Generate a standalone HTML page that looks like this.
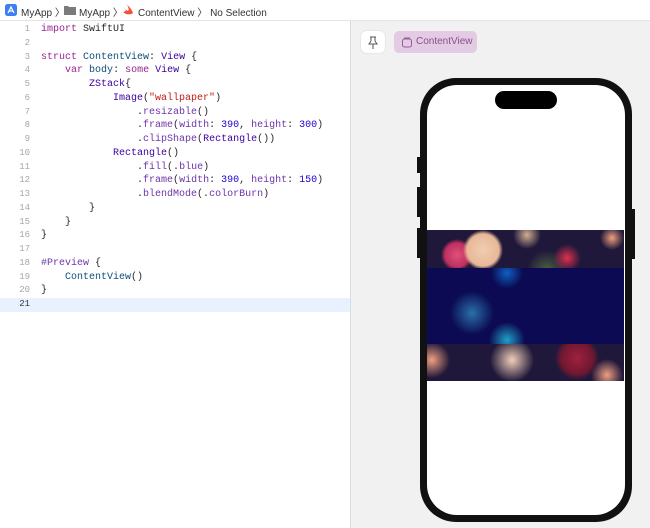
<!DOCTYPE html>
<html><head><meta charset="utf-8"><style>
body{margin:0;width:650px;height:528px;overflow:hidden;background:#fff;font-family:"Liberation Sans",sans-serif;position:relative}
.top{position:absolute;left:0;top:0;width:650px;height:20px;border-bottom:1px solid #e4e4e4;font-size:10px;color:#333;}
.top span{position:absolute;top:4px}
.code{position:absolute;left:0;top:23px;width:350px;font-family:"Liberation Mono",monospace;font-size:10px}
.ln{height:13.75px;line-height:13.75px;position:relative;white-space:pre;color:#262626}
.ln .n{position:absolute;left:0;width:30px;text-align:right;color:#a6a6a6;font-size:9px}
.ln .c{position:absolute;left:41px}
.k{color:#9b2393}.t{color:#0b4f79}.tp{color:#3900a0}.f{color:#6c36a9}.s{color:#c41a16}.nm{color:#1c00cf}
.hl{background:#e8f2fe}
.right{position:absolute;left:350px;top:21px;width:300px;height:507px;background:#f1f1f1;border-left:1px solid #dcdcdc}
</style></head><body>
<div class="top">
<svg style="position:absolute;left:5px;top:4px" width="12" height="12"><rect width="12" height="12" rx="2.5" fill="#3d7ff2"/><path d="M3 9 L6 3 L9 9 M4 7 H8" stroke="#fff" stroke-width="1.2" fill="none"/></svg>
<span style="left:21px">MyApp 〉</span>
<svg style="position:absolute;left:64px;top:5px" width="12" height="10"><path d="M0 1h4l1 1h7v8H0z" fill="#7a7a7a"/></svg>
<span style="left:79px">MyApp 〉</span>
<svg style="position:absolute;left:122px;top:4px" width="12" height="12"><path d="M1 8 C4 11 9 11 11 9 C10 6 7 2 5 1 C7 4 7 6 6 7 C4 6 2 4 1 3 C3 5 4 6 4 7 C3 7 2 8 1 8z" fill="#f05138"/></svg>
<span style="left:138px">ContentView 〉 No Selection</span>
</div>
<div class="code">
<div class="ln"><span class="n">1</span><span class="c"><span class="k">import</span> SwiftUI</span></div>
<div class="ln"><span class="n">2</span></div>
<div class="ln"><span class="n">3</span><span class="c"><span class="k">struct</span> <span class="t">ContentView</span>: <span class="tp">View</span> {</span></div>
<div class="ln"><span class="n">4</span><span class="c">    <span class="k">var</span> <span class="t">body</span>: <span class="k">some</span> <span class="tp">View</span> {</span></div>
<div class="ln"><span class="n">5</span><span class="c">        <span class="tp">ZStack</span>{</span></div>
<div class="ln"><span class="n">6</span><span class="c">            <span class="tp">Image</span>(<span class="s">"wallpaper"</span>)</span></div>
<div class="ln"><span class="n">7</span><span class="c">                .<span class="f">resizable</span>()</span></div>
<div class="ln"><span class="n">8</span><span class="c">                .<span class="f">frame</span>(<span class="f">width</span>: <span class="nm">390</span>, <span class="f">height</span>: <span class="nm">300</span>)</span></div>
<div class="ln"><span class="n">9</span><span class="c">                .<span class="f">clipShape</span>(<span class="tp">Rectangle</span>())</span></div>
<div class="ln"><span class="n">10</span><span class="c">            <span class="tp">Rectangle</span>()</span></div>
<div class="ln"><span class="n">11</span><span class="c">                .<span class="f">fill</span>(.<span class="f">blue</span>)</span></div>
<div class="ln"><span class="n">12</span><span class="c">                .<span class="f">frame</span>(<span class="f">width</span>: <span class="nm">390</span>, <span class="f">height</span>: <span class="nm">150</span>)</span></div>
<div class="ln"><span class="n">13</span><span class="c">                .<span class="f">blendMode</span>(.<span class="f">colorBurn</span>)</span></div>
<div class="ln"><span class="n">14</span><span class="c">        }</span></div>
<div class="ln"><span class="n">15</span><span class="c">    }</span></div>
<div class="ln"><span class="n">16</span><span class="c">}</span></div>
<div class="ln"><span class="n">17</span></div>
<div class="ln"><span class="n">18</span><span class="c"><span class="f">#Preview</span> {</span></div>
<div class="ln"><span class="n">19</span><span class="c">    <span class="t">ContentView</span>()</span></div>
<div class="ln"><span class="n">20</span><span class="c">}</span></div>
<div class="ln hl"><span class="n" style="color:#333">21</span></div>
</div>
<div class="right">
<div style="position:absolute;left:10px;top:10px;width:24px;height:22px;background:#fff;border-radius:5px;box-shadow:0 0 1px #aaa">
<svg width="24" height="22"><path d="M9 6h6M10 6v4l-2 3h8l-2-3V6M12 13v5" stroke="#555" fill="none" stroke-width="1"/></svg></div>
<div style="position:absolute;left:43px;top:10px;width:83px;height:22px;background:#e3cbe3;border-radius:5px;font-size:10px;color:#8a4e8e;">
<svg style="position:absolute;left:8px;top:6px" width="10" height="11"><rect x="0.5" y="2" width="9" height="8" rx="2" stroke="#9a5a9e" fill="none"/><path d="M2 1h6" stroke="#9a5a9e"/></svg>
<span style="position:absolute;left:22px;top:5px">ContentView</span></div>
<div style="position:absolute;left:66px;top:136px;width:3px;height:16px;background:#111"></div>
<div style="position:absolute;left:66px;top:166px;width:3px;height:30px;background:#111"></div>
<div style="position:absolute;left:66px;top:207px;width:3px;height:30px;background:#111"></div>
<div style="position:absolute;left:281px;top:188px;width:3px;height:50px;background:#111"></div>
<div style="position:absolute;left:69px;top:57px;width:212px;height:444px;background:#111;border-radius:36px;"></div>
<div style="position:absolute;left:76px;top:64px;width:198px;height:430px;background:#fff;border-radius:30px;"></div>
<div style="position:absolute;left:144px;top:70px;width:62px;height:18px;background:#000;border-radius:9px"></div>
<div style="position:absolute;left:76px;top:209px;width:197px;height:151px;overflow:hidden;background:#1d1836">
<div style="position:absolute;inset:0;background:
radial-gradient(circle at 56px 20px,#f0cdb0 0,#e8b898 16px,transparent 20px),
radial-gradient(circle at 30px 25px,#e0507a 0,#c03060 12px,transparent 16px),
radial-gradient(circle at 140px 28px,#e03050 0,transparent 14px),
radial-gradient(circle at 185px 8px,#f0a080 0,transparent 12px),
radial-gradient(circle at 5px 130px,#f0a080 0,transparent 18px),
radial-gradient(circle at 85px 130px,#f0d0b8 0,transparent 22px),
radial-gradient(circle at 150px 128px,#a02040 0,#701830 16px,transparent 22px),
radial-gradient(circle at 180px 145px,#f0a080 0,transparent 16px),
radial-gradient(circle at 100px 5px,#d0b090 0,transparent 14px),
radial-gradient(circle at 120px 40px,#4a6040 0,transparent 20px),
#20183a"></div>
<div style="position:absolute;left:0;top:38px;width:197px;height:76px;background:
radial-gradient(circle at 45px 45px,#2a70a8 0,transparent 22px),
radial-gradient(circle at 80px 72px,#20a0c8 0,transparent 18px),
radial-gradient(circle at 80px 5px,#1060c0 0,transparent 16px),
#0b0a52"></div>
</div>
</div>
</body></html>
